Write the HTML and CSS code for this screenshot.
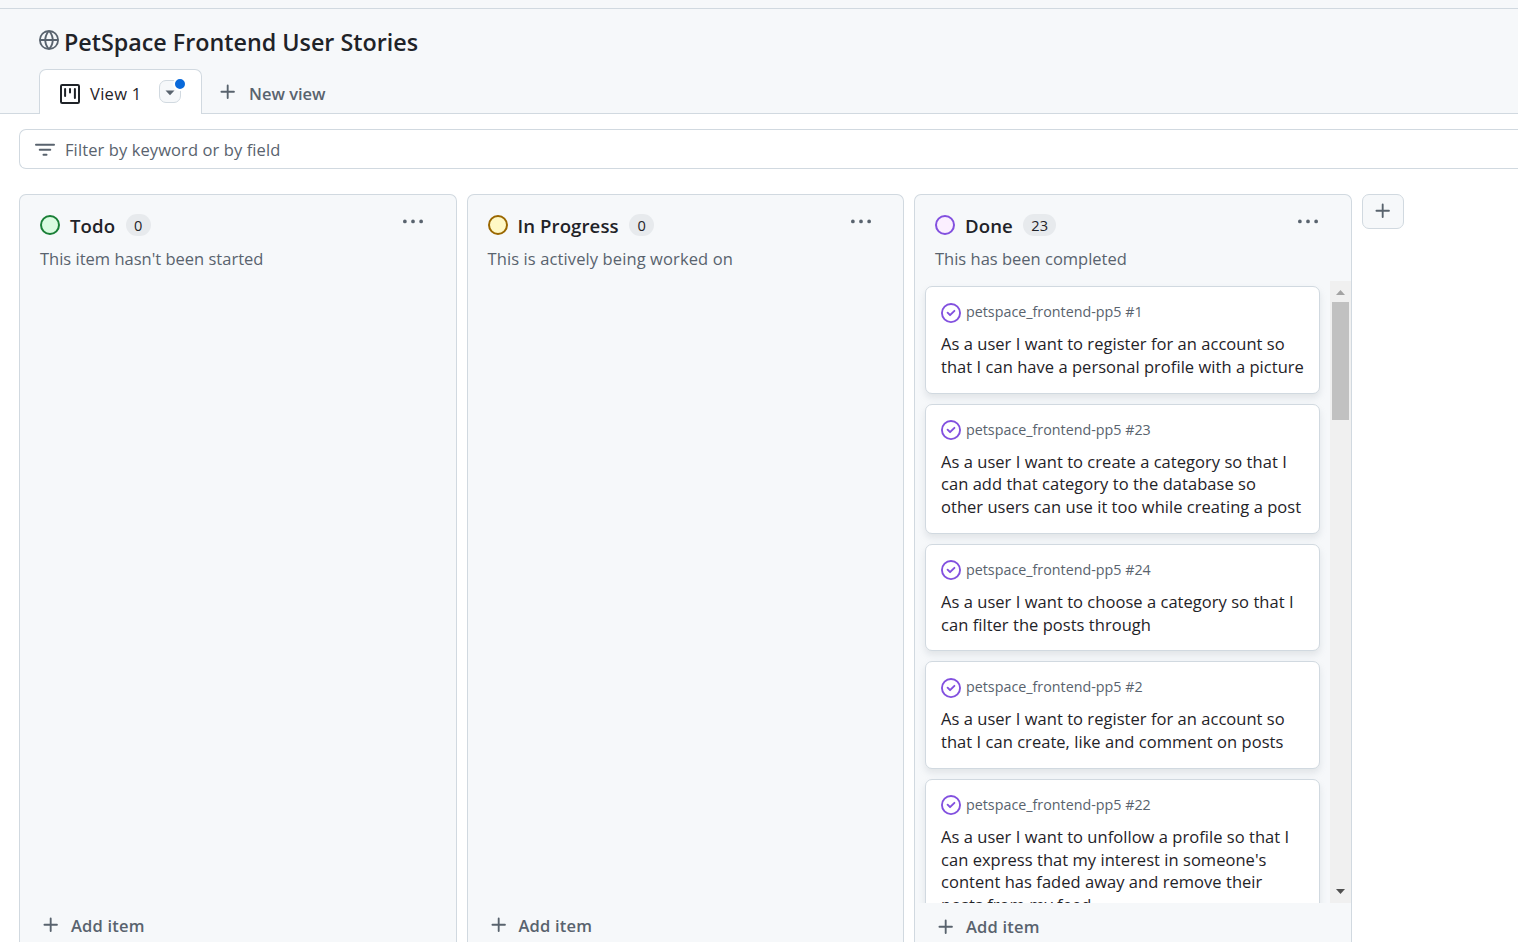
FILE: index.html
```html
<!DOCTYPE html>
<html lang="en">
<head>
<meta charset="utf-8">
<title>PetSpace Frontend User Stories</title>
<link rel="stylesheet" href="styles.css">
</head>
<body>
<svg width="0" height="0" class="defs">
  <symbol id="plus" viewBox="0 0 16 16"><path d="M7.75 2a.75.75 0 0 1 .75.75V7h4.25a.75.75 0 0 1 0 1.5H8.5v4.25a.75.75 0 0 1-1.5 0V8.5H2.75a.75.75 0 0 1 0-1.5H7V2.75A.75.75 0 0 1 7.75 2Z"/></symbol>
  <symbol id="dots" viewBox="0 0 16 16"><path d="M8 9a1.5 1.5 0 1 0 0-3 1.5 1.5 0 0 0 0 3ZM1.5 9a1.5 1.5 0 1 0 0-3 1.5 1.5 0 0 0 0 3Zm13 0a1.5 1.5 0 1 0 0-3 1.5 1.5 0 0 0 0 3Z"/></symbol>
  <symbol id="check" viewBox="0 0 16 16"><path d="M11.28 6.78a.75.75 0 0 0-1.06-1.06L7.25 8.69 5.78 7.22a.75.75 0 0 0-1.06 1.06l2 2a.75.75 0 0 0 1.06 0l3.5-3.5Z"/><path d="M16 8A8 8 0 1 1 0 8a8 8 0 0 1 16 0Zm-1.5 0a6.5 6.5 0 1 0-13 0 6.5 6.5 0 0 0 13 0Z"/></symbol>
</svg>
<div class="topbar"></div>
<header class="header">
  <div class="title-row">
    <svg class="icon globe" viewBox="0 0 16 16"><path d="M8 0a8 8 0 1 1 0 16A8 8 0 0 1 8 0ZM5.78 8.75a9.64 9.64 0 0 0 1.363 4.177c.255.426.542.832.857 1.215.245-.296.551-.705.857-1.215A9.64 9.64 0 0 0 10.22 8.75Zm4.44-1.5a9.64 9.64 0 0 0-1.363-4.177c-.307-.51-.612-.919-.857-1.215a9.927 9.927 0 0 0-.857 1.215A9.64 9.64 0 0 0 5.78 7.25Zm-5.944 1.5H1.543a6.507 6.507 0 0 0 4.666 5.5c-.123-.181-.24-.365-.352-.552-.715-1.192-1.437-2.874-1.581-4.948Zm-2.733-1.5h2.733c.144-2.074.866-3.756 1.58-4.948.12-.197.237-.381.353-.552a6.507 6.507 0 0 0-4.666 5.5Zm10.181 1.5c-.144 2.074-.866 3.756-1.58 4.948-.12.197-.237.381-.353.552a6.507 6.507 0 0 0 4.666-5.5Zm2.733-1.5a6.507 6.507 0 0 0-4.666-5.5c.123.181.24.365.353.552.714 1.192 1.436 2.874 1.58 4.948Z"/></svg>
    <h1 class="title">PetSpace Frontend User Stories</h1>
  </div>
  <nav class="tabs">
    <div class="tab">
      <svg class="icon tab-icon" viewBox="0 0 20 20"><rect x="1" y="1" width="18" height="18" rx="1.2" fill="none" stroke="currentColor" stroke-width="2"/><path d="M5.1 5v7M10 5v3.4M14.9 5v9" fill="none" stroke="currentColor" stroke-width="2" stroke-linecap="round"/></svg>
      <span class="tab-label">View 1</span>
      <span class="tab-menu"><svg width="10" height="6" viewBox="0 0 10 6"><path d="M.5.5h9L5 5.2Z" fill="currentColor"/></svg><i class="unsaved"></i></span>
    </div>
    <div class="new-view"><svg class="icon"><use href="#plus"/></svg><span>New view</span></div>
  </nav>
</header>
<main>
  <div class="filter">
    <svg class="icon" viewBox="0 0 16 16"><path d="M.75 3h14.5a.75.75 0 0 1 0 1.5H.75a.75.75 0 0 1 0-1.5ZM3 7.75A.75.75 0 0 1 3.75 7h8.5a.75.75 0 0 1 0 1.5h-8.5A.75.75 0 0 1 3 7.75Zm3 4a.75.75 0 0 1 .75-.75h2.5a.75.75 0 0 1 0 1.5h-2.5a.75.75 0 0 1-.75-.75Z"/></svg>
    <span>Filter by keyword or by field</span>
  </div>
  <div class="board">
    <section class="column">
      <div class="column-head">
        <div class="head-row"><i class="status green"></i><h2 class="name">Todo</h2><span class="count">0</span><svg class="icon dots"><use href="#dots"/></svg></div>
        <p class="desc">This item hasn't been started</p>
      </div>
      <div class="empty"></div>
      <div class="add-item"><svg class="icon"><use href="#plus"/></svg><span>Add item</span></div>
    </section>
    <section class="column">
      <div class="column-head">
        <div class="head-row"><i class="status yellow"></i><h2 class="name">In Progress</h2><span class="count">0</span><svg class="icon dots"><use href="#dots"/></svg></div>
        <p class="desc wide">This is actively being worked on</p>
      </div>
      <div class="empty"></div>
      <div class="add-item"><svg class="icon"><use href="#plus"/></svg><span>Add item</span></div>
    </section>
    <section class="column">
      <div class="column-head">
        <div class="head-row"><i class="status purple"></i><h2 class="name">Done</h2><span class="count">23</span><svg class="icon dots"><use href="#dots"/></svg></div>
        <p class="desc">This has been completed</p>
      </div>
      <div class="scroller">
        <div class="cards">
          <article class="card"><div class="card-head"><svg class="icon check"><use href="#check"/></svg><span>petspace_frontend-pp5 #1</span></div><p class="story">As a user I want to register for an account so<br>that I can have a personal profile with a picture</p></article>
          <article class="card"><div class="card-head"><svg class="icon check"><use href="#check"/></svg><span>petspace_frontend-pp5 #23</span></div><p class="story">As a user I want to create a category so that I<br>can add that category to the database so<br>other users can use it too while creating a post</p></article>
          <article class="card"><div class="card-head"><svg class="icon check"><use href="#check"/></svg><span>petspace_frontend-pp5 #24</span></div><p class="story">As a user I want to choose a category so that I<br>can filter the posts through</p></article>
          <article class="card"><div class="card-head"><svg class="icon check"><use href="#check"/></svg><span>petspace_frontend-pp5 #2</span></div><p class="story">As a user I want to register for an account so<br>that I can create, like and comment on posts</p></article>
          <article class="card"><div class="card-head"><svg class="icon check"><use href="#check"/></svg><span>petspace_frontend-pp5 #22</span></div><p class="story">As a user I want to unfollow a profile so that I<br>can express that my interest in someone's<br>content has faded away and remove their<br>posts from my feed</p></article>
        </div>
        <div class="scrollbar">
          <svg class="arrow up" width="9" height="5" viewBox="0 0 9 5"><path d="M0 5h9L4.5 0Z" fill="#a3a3a3"/></svg>
          <div class="thumb"></div>
          <svg class="arrow down" width="9" height="5" viewBox="0 0 9 5"><path d="M0 0h9L4.5 5Z" fill="#505050"/></svg>
        </div>
      </div>
      <div class="add-item lower"><svg class="icon"><use href="#plus"/></svg><span>Add item</span></div>
    </section>
    <div class="add-column"><svg class="icon"><use href="#plus"/></svg></div>
  </div>
</main>
</body>
</html>
```
FILE: styles.css
```css
* { box-sizing: border-box; }
html, body { height: 100%; }
body {
  margin: 0;
  height: 942px;
  overflow: hidden;
  display: flex;
  flex-direction: column;
  background: #fff;
  color: #1f2328;
  font: 16.5px/22.75px "Open Sans", "Noto Sans", sans-serif;
  letter-spacing: 0.04px;
  white-space: nowrap;
}
.defs { position: absolute; }
h1, h2, p { margin: 0; }
.icon { width: 20px; height: 20px; flex: none; fill: #59636e; }

.topbar { height: 9px; flex: none; background: #f6f8fa; border-bottom: 1px solid #d1d9e0; }
.header {
  flex: none;
  height: 105px;
  background: #f6f8fa;
  box-shadow: inset 0 -1px #d1d9e0;
  padding: 17px 39px 0;
  display: flex;
  flex-direction: column;
  justify-content: space-between;
}
.title-row { display: flex; gap: 5px; height: 32px; }
.globe { margin-top: 4px; }
.title { font-size: 23.3px; font-weight: 600; line-height: 32px; letter-spacing: 0; }

.tabs { display: flex; height: 45px; }
.tab {
  width: 163px;
  padding: 4px 19px 0 20px;
  display: flex;
  align-items: center;
  background: #fff;
  border: 1px solid #d1d9e0;
  border-bottom: 0;
  border-radius: 7px 7px 0 0;
}
.tab-icon { color: #1f2328; }
.tab-label { margin-left: 10px; width: 51px; letter-spacing: 0.3px; }
.tab-menu {
  position: relative;
  margin: -5px 0 0 18px;
  width: 22px;
  height: 23px;
  flex: none;
  display: grid;
  place-items: center;
  color: #59636e;
  background: #f6f8fa;
  border: 1px solid #d1d9e0;
  border-radius: 7px;
}
.tab-menu svg { margin-top: 3px; }
.unsaved {
  position: absolute;
  top: -4px;
  right: -7px;
  width: 14px;
  height: 14px;
  border: 2px solid #fff;
  border-radius: 50%;
  background: #0969da;
}
.new-view { display: flex; align-items: center; gap: 11px; padding: 4px 0 0 16px; color: #59636e; font-weight: 600; letter-spacing: 0; }
.new-view .icon { margin-top: -4px; }
.new-view span { margin-top: 1px; }

main { flex: 1; min-height: 0; display: flex; flex-direction: column; padding: 15px 0 0 19px; }
.filter {
  flex: none;
  height: 40px;
  padding-left: 15px;
  display: flex;
  align-items: center;
  gap: 10px;
  color: #59636e;
  letter-spacing: 0.1px;
  border: 1px solid #d1d9e0;
  border-right: 0;
  border-radius: 7px 0 0 7px;
}
.filter .icon { margin-top: 2px; }
.filter span { margin-top: 2px; }
.board { flex: 1; min-height: 0; display: flex; gap: 10px; margin-top: 25px; }
.column {
  width: 437.5px;
  flex: none;
  display: flex;
  flex-direction: column;
  background: #f6f8fa;
  border: 1px solid #d1d9e0;
  border-bottom: 0;
  border-radius: 7px 7px 0 0;
}
.column-head { height: 86px; flex: none; padding: 18px 32.5px 0 20px; }
.head-row { display: flex; align-items: center; height: 24px; }
.status { width: 20px; height: 20px; flex: none; border: 2px solid; border-radius: 50%; }
.green { border-color: #1a7f37; background: #dafbe1; }
.yellow { border-color: #9a6700; background: #fff8c5; }
.purple { border-color: #8250df; background: #fbefff; }
.name { margin: 2px 0 0 10px; font-size: 18.6px; line-height: 24px; font-weight: 600; letter-spacing: 0.08px; }
.count { margin-left: 10.5px; min-width: 25px; height: 22px; padding: 0 8px; border-radius: 11px; background: #e7eaed; font-size: 14.6px; line-height: 22px; text-align: center; }
.dots { margin: -6px 0 0 auto; }
.desc { margin-top: 11px; color: #59636e; letter-spacing: 0; }
.wide { letter-spacing: 0.11px; }
.empty { flex: 1; }
.add-item { height: 34px; flex: none; padding: 0 20px 0 21px; display: flex; align-items: center; gap: 10px; color: #59636e; font-weight: 600; letter-spacing: 0.2px; }
.lower { height: 39px; padding-top: 8px; }
.add-item span { margin-top: 2px; }

.scroller { flex: 1; min-height: 0; display: flex; overflow: hidden; }
.cards { flex: 1; padding: 5px 10px 0; display: flex; flex-direction: column; gap: 10px; }
.card {
  flex: none;
  padding: 15px 15px 14px;
  background: #fff;
  border: 1px solid #d1d9e0;
  border-radius: 7px;
  box-shadow: 0 4px 7px rgba(140, 149, 159, .2);
}
.card-head { display: flex; align-items: center; gap: 5px; height: 21px; color: #59636e; font-size: 14.3px; line-height: 20px; letter-spacing: 0; }
.card-head span { margin-top: -1px; }
.check { fill: #8250df; }
.story { margin-top: 10px; }
.scrollbar { width: 21px; flex: none; background: #f0f0f0; display: flex; flex-direction: column; align-items: center; }
.up { margin-top: 9px; }
.thumb { width: 17px; height: 118px; margin-top: 7px; background: #c1c1c1; }
.down { margin: auto 0 9px; }

.add-column { width: 42px; height: 35px; display: grid; place-items: center; background: #f6f8fa; border: 1px solid #d1d9e0; border-radius: 7px; }
.add-column .icon { margin-top: -1px; }
```
